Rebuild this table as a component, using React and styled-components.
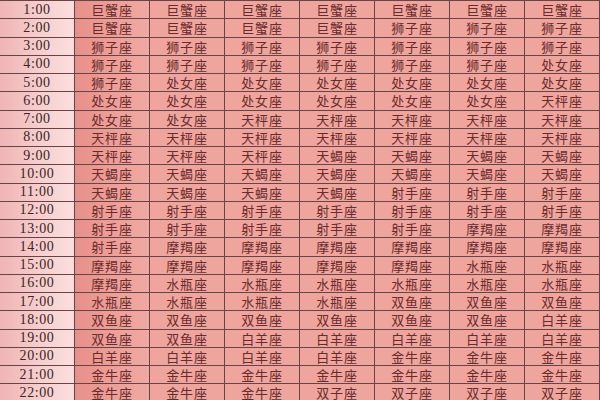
import React from 'react';
import styled, { createGlobalStyle } from 'styled-components';

const GlobalStyle = createGlobalStyle`
  html, body {
    margin: 0;
    padding: 0;
    width: 600px;
    height: 400px;
    overflow: hidden;
    background: #f4c6c4;
  }
`;

const rows = [
  ['巨蟹', '巨蟹', '巨蟹', '巨蟹', '巨蟹', '巨蟹', '巨蟹'],
  ['巨蟹', '巨蟹', '巨蟹', '巨蟹', '狮子', '狮子', '狮子'],
  ['狮子', '狮子', '狮子', '狮子', '狮子', '狮子', '狮子'],
  ['狮子', '狮子', '狮子', '狮子', '狮子', '狮子', '处女'],
  ['狮子', '处女', '处女', '处女', '处女', '处女', '处女'],
  ['处女', '处女', '处女', '处女', '处女', '处女', '天枰'],
  ['处女', '处女', '天枰', '天枰', '天枰', '天枰', '天枰'],
  ['天枰', '天枰', '天枰', '天枰', '天枰', '天枰', '天枰'],
  ['天枰', '天枰', '天枰', '天蝎', '天蝎', '天蝎', '天蝎'],
  ['天蝎', '天蝎', '天蝎', '天蝎', '天蝎', '天蝎', '天蝎'],
  ['天蝎', '天蝎', '天蝎', '天蝎', '射手', '射手', '射手'],
  ['射手', '射手', '射手', '射手', '射手', '射手', '射手'],
  ['射手', '射手', '射手', '射手', '射手', '摩羯', '摩羯'],
  ['射手', '摩羯', '摩羯', '摩羯', '摩羯', '摩羯', '摩羯'],
  ['摩羯', '摩羯', '摩羯', '摩羯', '摩羯', '水瓶', '水瓶'],
  ['摩羯', '水瓶', '水瓶', '水瓶', '水瓶', '水瓶', '水瓶'],
  ['水瓶', '水瓶', '水瓶', '水瓶', '双鱼', '双鱼', '双鱼'],
  ['双鱼', '双鱼', '双鱼', '双鱼', '双鱼', '双鱼', '白羊'],
  ['双鱼', '双鱼', '白羊', '白羊', '白羊', '白羊', '白羊'],
  ['白羊', '白羊', '白羊', '白羊', '金牛', '金牛', '金牛'],
  ['金牛', '金牛', '金牛', '金牛', '金牛', '金牛', '金牛'],
  ['金牛', '金牛', '金牛', '双子', '双子', '双子', '双子'],
];

const Table = styled.div`
  display: grid;
  grid-template-columns: 74px repeat(7, 74px);
  grid-auto-rows: 17.25px;
  gap: 1px;
  background: #6a4444;
  border-top: 1px solid #6a4444;
  width: 600px;
`;

const TimeCell = styled.div`
  display: flex;
  align-items: center;
  justify-content: center;
  background: linear-gradient(90deg, #efb4b4 0%, #f6cfcf 55%, #fadfde 100%);
  color: #3e2424;
  font-family: "Liberation Serif", "DejaVu Serif", serif;
  font-size: 14px;
  letter-spacing: 0.6px;
`;

const SignCell = styled.div`
  display: flex;
  align-items: center;
  justify-content: center;
  background: ${p => p.$first
    ? 'linear-gradient(90deg, #e7908a 0%, #ec9f98 50%, #efa9a2 100%)'
    : '#eea59d'};
  color: #6a2b2b;
  font-family: "Noto Sans CJK SC", "Noto Sans", sans-serif;
  font-size: 13px;
  letter-spacing: 0.8px;
  white-space: nowrap;
`;

export default function App() {
  return (
    <>
      <GlobalStyle />
      <Table>
        {rows.map((row, i) => (
          <React.Fragment key={i}>
            <TimeCell>{`${i + 1}:00`}</TimeCell>
            {row.map((sign, j) => (
              <SignCell key={j} $first={j === 0}>{sign}座</SignCell>
            ))}
          </React.Fragment>
        ))}
      </Table>
    </>
  );
}
